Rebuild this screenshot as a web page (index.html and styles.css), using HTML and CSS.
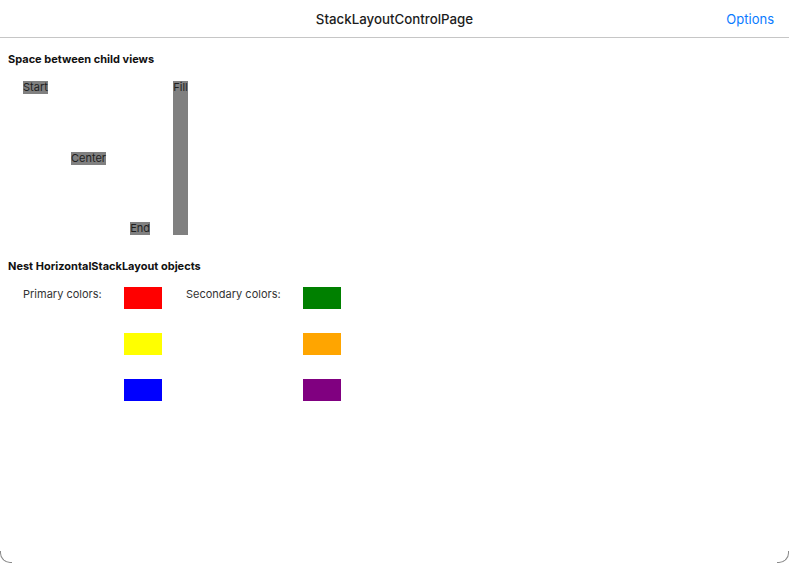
FILE: index.html
```html
<!DOCTYPE html>
<html>
<head>
<meta charset="utf-8">
<link rel="stylesheet" href="styles.css">
</head>
<body>
<div class="window">
  <header class="navbar">
    <div class="nav-title">StackLayoutControlPage</div>
    <a class="nav-action">Options</a>
  </header>
  <main class="content">
    <div class="section-title">Space between child views</div>
    <div class="space-demo">
      <div class="space-column">
        <span class="chip chip-start">Start</span>
        <span class="chip chip-center">Center</span>
        <span class="chip chip-end">End</span>
      </div>
      <div class="fill-bar">Fill</div>
    </div>

    <div class="section-title section-title-2">Nest HorizontalStackLayout objects</div>
    <div class="nest-demo">
      <div class="color-group">
        <div class="color-label label-primary">Primary colors:</div>
        <div class="swatches">
          <div class="swatch red"></div>
          <div class="swatch yellow"></div>
          <div class="swatch blue"></div>
        </div>
      </div>
      <div class="color-group">
        <div class="color-label label-secondary">Secondary colors:</div>
        <div class="swatches">
          <div class="swatch green"></div>
          <div class="swatch orange"></div>
          <div class="swatch purple"></div>
        </div>
      </div>
    </div>
  </main>
  <div class="corner corner-left"></div>
  <div class="corner corner-right"></div>
</div>
</body>
</html>
```

FILE: styles.css
```css
html, body {
  margin: 0;
  padding: 0;
  background: #ffffff;
}

body {
  font-family: Inter, "Liberation Sans", Arial, sans-serif;
  color: #1a1a1a;
}

.window {
  position: relative;
  width: 789px;
  height: 563px;
  overflow: hidden;
  background: #ffffff;
}

.navbar {
  position: relative;
  height: 37px;
  border-bottom: 1px solid #c6c6c6;
  display: flex;
  align-items: center;
  justify-content: center;
}

.nav-title {
  font-size: 13.3px;
  font-weight: 500;
  color: #1c1c1c;
}

.nav-action {
  position: absolute;
  right: 15px;
  top: 11px;
  font-size: 13px;
  color: #0a7aff;
}

.content {
  padding: 15px 0 0 8px;
}

.section-title {
  font-size: 11px;
  font-weight: 700;
  color: #111;
  line-height: 13px;
}

.space-demo {
  display: flex;
  margin: 15px 0 0 15px;
  height: 154px;
  gap: 23px;
}

.space-column {
  width: 127px;
  display: flex;
  flex-direction: column;
  justify-content: space-between;
}

.chip {
  background: #808080;
  color: #1f1f1f;
  font-size: 11px;
  line-height: 13px;
  padding: 0;
}

.chip-start {
  align-self: flex-start;
}

.chip-center {
  align-self: center;
  margin-left: 4px;
}

.chip-end {
  align-self: flex-end;
}

.fill-bar {
  width: 15px;
  background: #808080;
  color: #1f1f1f;
  font-size: 11px;
  line-height: 13px;
  text-align: center;
}

.section-title-2 {
  margin-top: 25px;
}

.nest-demo {
  display: flex;
  gap: 24px;
  margin: 14px 0 0 15px;
}

.color-group {
  display: flex;
}

.color-label {
  font-size: 11px;
  color: #333;
  line-height: 13px;
  padding-top: 1px;
}

.label-primary {
  width: 101px;
}

.label-secondary {
  width: 117px;
}

.swatches {
  display: flex;
  flex-direction: column;
  gap: 24px;
}

.swatch {
  width: 38px;
  height: 22px;
}

.red { background: #ff0000; }
.yellow { background: #ffff00; }
.blue { background: #0000ff; }
.green { background: #008000; }
.orange { background: #ffa500; }
.purple { background: #800080; }

.corner {
  position: absolute;
  bottom: 0;
  width: 12px;
  height: 12px;
  border-bottom: 1px solid #8a8a8a;
  box-sizing: border-box;
}

.corner-left {
  left: 0;
  border-left: 1px solid #8a8a8a;
  border-bottom-left-radius: 10px;
}

.corner-right {
  right: 0;
  border-right: 1px solid #8a8a8a;
  border-bottom-right-radius: 10px;
}
```
